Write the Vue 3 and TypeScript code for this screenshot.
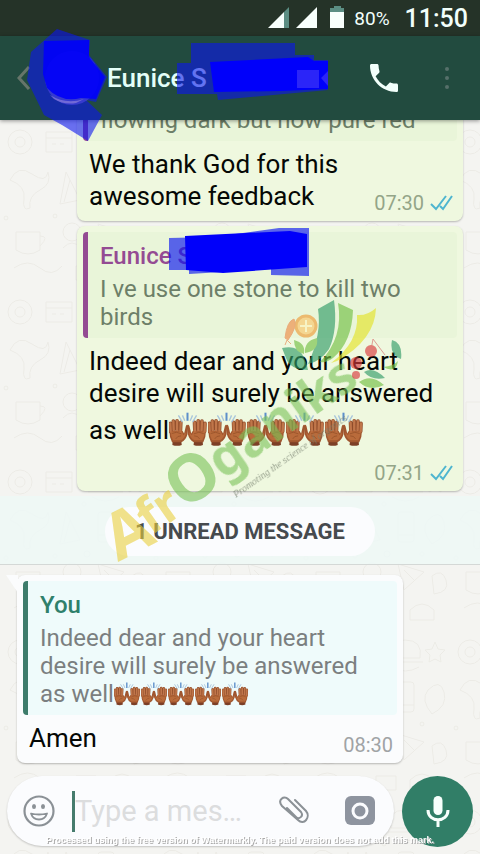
<script setup lang="ts">
import { ref } from 'vue'

interface Quote {
  author?: string
  text: string
  hands?: number
  tone: 'purple' | 'green'
}

interface Message {
  id: number
  mine: boolean
  quote: Quote
  text: string
  hands?: number
  time: string
}

const earlier: Message[] = [
  {
    id: 1,
    mine: true,
    quote: { text: 'flowing dark but now pure red', tone: 'purple' },
    text: 'We thank God for this awesome feedback',
    time: '07:30',
  },
  {
    id: 2,
    mine: true,
    quote: { author: 'Eunice S', text: 'I ve use one stone to kill two birds', tone: 'purple' },
    text: 'Indeed dear and your heart desire will surely be answered as well',
    hands: 5,
    time: '07:31',
  },
]

const unread: Message[] = [
  {
    id: 3,
    mine: false,
    quote: {
      author: 'You',
      text: 'Indeed dear and your heart desire will surely be answered as well',
      hands: 5,
      tone: 'green',
    },
    text: 'Amen',
    time: '08:30',
  },
]

const groups = [
  { key: 'earlier', messages: earlier },
  { key: 'unread', messages: unread },
]

const draft = ref('')
</script>

<template>
  <div class="screen">
    <svg class="defs" width="0" height="0" aria-hidden="true">
      <defs>
        <g id="hand">
          <path d="M11 84 L36 84 L38 98 Q24 103 10 98 Z" fill="#7c3f26" />
          <path d="M5 58 L4 34 M14 52 L13 27 M24 52 L24 26 M34 54 L35 31" stroke="#8f4c2a" stroke-width="11" stroke-linecap="round" />
          <path d="M1 56 L40 56 L45 64 L50 42 Q54 34 57 42 L55 66 Q50 84 37 90 L9 90 Q1 76 1 56Z" fill="#a0562f" />
          <path d="M5 58 L4 34 M14 54 L13 27 M24 54 L24 26 M34 56 L35 31" stroke="#c0764a" stroke-width="7" stroke-linecap="round" />
          <path d="M5 58 L38 58 L43 69 L51 60 Q48 79 35 84 L12 84 Q5 74 5 58Z" fill="#b96b3b" />
          <path d="M8 64 Q22 56 37 65 M20 80 Q25 70 36 71" fill="none" stroke="#8f4c26" stroke-width="2" />
        </g>
        <symbol id="hands" viewBox="0 0 116 104">
          <use href="#hand" />
          <use href="#hand" transform="translate(111 0) scale(-1 1)" />
          <path d="M55 2 L55 26" stroke="#5c8fca" stroke-width="6" />
          <path d="M40 10 L47 26 M70 10 L63 26 M28 10 L40 30 M82 10 L70 30" stroke="#a9c6dc" stroke-width="4" />
        </symbol>
        <pattern id="doodles" width="150" height="170" patternUnits="userSpaceOnUse">
          <g fill="none" stroke="#ecebe6" stroke-width="1">
            <circle cx="20" cy="22" r="12" /><circle cx="20" cy="22" r="5" />
            <path d="M46 12h26v20H46zM46 18h26M52 24h4m4 0h4" />
            <path d="M91 28q-4-18 14-18t15 18zM88 32h35M92 37q13 8 27 0" />
            <path d="M135 12l3 7 7 1-5 5 1 7-6-3-6 3 1-7-5-5 7-1z" />
            <path d="M10 60q8-16 22-6t16-2q4 12-8 18t-10 18q-8 4-6-9T10 60z" />
            <path d="M66 52l14 28-20 4zM70 60l-6 22" />
            <rect x="98" y="52" width="16" height="30" rx="3" /><path d="M98 75h16" />
            <path d="M128 60q12-12 16 2t-12 22q-12-14-4-24z" />
            <path d="M16 112h24v18q-12 8-24 0zM40 116q10 0 0 10" />
            <circle cx="72" cy="112" r="9" /><path d="M63 128q9-10 18 0M98 104l26 8-20 18zM104 110l10 10" />
            <path d="M132 116q10-8 14 4t-12 14zM14 148q14-10 26 0t22-2M76 146h20v14H76zM110 150q12-12 24 0v10h-24z" />
            <circle cx="55" cy="96" r="2" /><circle cx="87" cy="94" r="3" /><circle cx="84" cy="44" r="2" /><circle cx="122" cy="94" r="2" /><circle cx="6" cy="98" r="2" />
          </g>
        </pattern>
      </defs>
    </svg>

    <div class="status">
      <svg width="78" height="24" viewBox="0 0 78 24" aria-hidden="true">
        <path d="M0 22L16 6v16z" fill="#f7fffc" /><path d="M16 6l5-5v21h-5z" fill="#5b8e83" />
        <path d="M28 22L49 1v21z" fill="#f7fffc" />
        <path d="M62 6V2h4V0h7v2h3v4z" fill="#5b8e83" /><path d="M62 6h14v16H62z" fill="#f7fffc" />
      </svg>
      <span class="percent">80%</span>
      <span class="clock">11:50</span>
    </div>

    <header class="bar">
      <button class="icon back" type="button" aria-label="Back">
        <svg width="14" height="24" viewBox="0 0 14 24"><path d="M12 1L2 12l10 11" fill="none" stroke="#66756a" stroke-width="3" /></svg>
      </button>
      <div class="avatar"></div>
      <h1>Eunice S</h1>
      <button class="icon" type="button" aria-label="Call">
        <svg width="28" height="28" viewBox="3 3 18 18"><path fill="#f2fffb" d="M6.6 10.8c1.4 2.8 3.8 5.1 6.6 6.6l2.2-2.2c.3-.3.7-.4 1-.2 1.100.4 2.300.6 3.600.6.600 0 1 .4 1 1V20c0 .6-.4 1-1 1C10.600 21 3 13.400 3 4c0-.6.400-1 1-1h3.500c.6 0 1 .4 1 1 0 1.200.2 2.400.6 3.600.1.300 0 .7-.2 1z" /></svg>
      </button>
      <button class="icon more" type="button" aria-label="More options">
        <svg width="6" height="24" viewBox="0 0 6 24" fill="#56706a"><circle cx="3" cy="3" r="2" /><circle cx="3" cy="12" r="2" /><circle cx="3" cy="21" r="2" /></svg>
      </button>
    </header>

    <main class="room">
      <svg class="wallpaper" width="100%" height="100%" aria-hidden="true"><rect width="100%" height="100%" fill="url(#doodles)" /></svg>

      <section class="chat">
        <template v-for="group in groups" :key="group.key">
          <div v-if="group.key === 'unread'" class="divider"><span>1 UNREAD MESSAGE</span></div>
          <article v-for="m in group.messages" :key="m.id" class="bubble" :class="m.mine ? 'mine' : 'theirs'">
            <svg v-if="!m.mine" class="tail" width="12" height="18" viewBox="0 0 12 18" aria-hidden="true"><path d="M0 0h12v18z" fill="#fbfcfd" /></svg>
            <blockquote class="quote" :class="m.quote.tone">
              <strong v-if="m.quote.author">{{ m.quote.author }}</strong>
              <p>{{ m.quote.text }}<svg v-for="n in m.quote.hands ?? 0" :key="n" class="hands small"><use href="#hands" /></svg></p>
            </blockquote>
            <div class="body" :class="{ stacked: m.hands }">
              <p>{{ m.text }}<svg v-for="n in m.hands ?? 0" :key="n" class="hands"><use href="#hands" /></svg></p>
              <div class="meta">
                <time>{{ m.time }}</time>
                <svg v-if="m.mine" width="23" height="16" viewBox="0 0 23 16" aria-label="Read"><path d="M1 9l5 5L16 1M10 11l3 3L22 1" fill="none" stroke="#4fb5cf" stroke-width="2" /></svg>
              </div>
            </div>
          </article>
        </template>
      </section>

      <form class="composer" @submit.prevent>
        <div class="field">
          <button class="icon" type="button" aria-label="Emoji">
            <svg width="32" height="32" viewBox="0 0 32 32"><circle cx="16" cy="16" r="14.500" fill="none" stroke="#8b9196" stroke-width="2.200" /><ellipse cx="11" cy="11.500" rx="2" ry="2.600" fill="#8b9196" /><ellipse cx="20" cy="11.500" rx="2" ry="2.600" fill="#8b9196" /><path d="M8 18.500q8 2 16 0q-2 6-8 6t-8-6z" fill="none" stroke="#8b9196" stroke-width="1.800" stroke-linejoin="round" /></svg>
          </button>
          <span class="caret"></span>
          <input v-model="draft" type="text" aria-label="Message" placeholder="Type a mes…" />
          <button class="icon" type="button" aria-label="Attach">
            <svg width="32" height="30" viewBox="0 0 32 30"><path d="M17 4l11 11c5 6-2 15-8 9L4 10C-1 4 6-1 10 3l13 13c3 4-2 8-5 5L9 12" fill="none" stroke="#8b9196" stroke-width="2" stroke-linecap="round" /></svg>
          </button>
          <button class="icon camera" type="button" aria-label="Camera">
            <svg width="30" height="30" viewBox="0 0 30 30"><rect width="30" height="29" rx="6" fill="#8e949f" /><circle cx="15" cy="15" r="7" fill="none" stroke="#fbfcfe" stroke-width="3" /></svg>
          </button>
        </div>
        <button class="mic" type="button" aria-label="Record voice message">
          <svg width="24" height="32" viewBox="0 0 24 32"><rect x="7.500" y="0" width="9" height="19" rx="4.500" fill="#f7fffc" /><path d="M2 14c0 13 20 13 20 0M12 23v8" fill="none" stroke="#f7fffc" stroke-width="3" /></svg>
        </button>
      </form>
    </main>

    <svg class="overlay" viewBox="0 0 480 854" aria-hidden="true">
      <g fill="#0b16ef">
        <path d="M57 29L90 40l-1 15 18 22-11 25-10-2 16 15-14 26-26-16-18-10-17-35 4-28z" opacity=".6" />
        <path d="M44 41l45-1v17l16 20-9 22-15-1q-20 5-34-10l-4-14z" fill="#0000fa" opacity=".9" />
        <path d="M50 95q16 10 34 4l-8 4q-12 2-22-4z" fill="#8176d8" opacity=".8" />
        <path d="M191 43h104v12h19v5h14v30l-110 10-1-6h-40V63h14z" opacity=".6" />
        <path d="M210 62l98-5 6 4h14v28l-48 2-66 1z" fill="#0000fa" />
        <path d="M319 70h-22v18h22zm2 8l7-7v15z" fill="#5549f6" opacity=".5" />
        <path d="M169 238l44-1 66-9h30v48l-38-1v-6l-82 5v-4h-20z" opacity=".65" />
        <path d="M185 236l105-5 17 3v33l-84 6-37-3z" fill="#0000fa" />
      </g>

      <g class="logo">
        <g fill="#e9cf3c">
          <text x="118" y="562" font-size="65" transform="rotate(-27 118 562)">A</text>
          <text x="151" y="536" font-size="50" transform="rotate(-35 151 536)">fr</text>
        </g>
        <g fill="#79c257">
          <text x="184" y="511" font-size="65" transform="rotate(-35 184 511)">O</text>
          <text x="223" y="480" font-size="51" transform="rotate(-35 223 480)">ganiks</text>
        </g>
      </g>
      <text class="tagline" x="236" y="498" transform="rotate(-35 236 498)">Promoting the science of organics</text>

      <g opacity=".65">
        <circle cx="306" cy="326" r="10" fill="#fbc56a" stroke="#ee9a36" stroke-width="3" />
        <path d="M306 320v12M300 326h12" stroke="#fff1ba" stroke-width="2" />
        <path d="M285 338q2-17 9-19 4 7-6 21zM287 340l-2 5m2-5l4 4" fill="#f08b45" stroke="#e7854b" />
        <path d="M318 309l16-9q4 30-5 49-9 13-21 15 14-30 10-55z" fill="#329b68" />
        <path d="M338 303l15 7q-1 32-20 48-6 5-13 4 24-25 18-59z" fill="#72bf44" />
        <path d="M357 315q10 1 19-7-1 32-39 53l-6 2q28-21 26-48z" fill="#e4e229" />
        <path d="M282 348q15-3 20 6t6 16q-18 0-22-12z" fill="#329b68" />
        <path d="M294 340q12 3 10 14-10-2-10-14zM305 353q-1-12 12-15 2 13-12 15z" fill="#72bf44" />
        <path d="M371 350l2-11 12 16" fill="none" stroke="#d66b6a" />
        <circle cx="371" cy="351" r="6" fill="#d83a3c" /><circle cx="356" cy="363" r="6" fill="#d83a3c" /><circle cx="356" cy="375" r="4" fill="#d83a3c" />
        <path d="M392 340q11 3 9 19-12-4-9-19zM364 372q9-6 21 6-13 3-21-6z" fill="#329b68" />
        <path d="M359 382q12-9 25 3-14 7-25-3zM383 367q11-1 15-6-2 13-15 6z" fill="#72bf44" />
      </g>
      <text class="notice" x="46" y="843">Processed using the free version of Watermarkly. The paid version does not add this mark.</text>
    </svg>
  </div>
</template>

<style>
body {
  margin: 0;
}
</style>

<style scoped>
.screen {
  position: relative;
  display: flex;
  flex-direction: column;
  height: 100vh;
  overflow: hidden;
  font-family: Roboto, "Liberation Sans", sans-serif;
  background: #f4f4f1;
}

.defs {
  position: absolute;
}

p,
h1,
blockquote {
  margin: 0;
}

.icon {
  display: flex;
  padding: 0;
  border: 0;
  background: none;
}

.status {
  display: flex;
  flex: 0 0 36px;
  align-items: center;
  justify-content: flex-end;
  padding-right: 12px;
  background: #253328;
  color: #f2fffb;
}

.percent {
  margin-left: 8px;
  font-size: 19px;
}

.clock {
  margin-left: 15px;
  font-size: 25px;
  font-weight: 500;
}

.bar {
  z-index: 1;
  display: flex;
  flex: 0 0 84px;
  align-items: center;
  padding: 0 30px 0 17px;
  background: #224b3f;
  box-shadow: 0 1px 4px rgba(0, 0, 0, 0.4);
}

.avatar {
  width: 54px;
  height: 54px;
  margin-left: 14px;
  border-radius: 50%;
  background: #77709f;
}

.bar h1 {
  flex: 1;
  margin-left: 8px;
  color: #e4fff8;
  font-size: 26px;
  font-weight: 500;
}

.more {
  margin-left: 46px;
}

.room {
  position: relative;
  display: flex;
  flex: 1;
  flex-direction: column;
  min-height: 0;
}

.wallpaper {
  position: absolute;
  inset: 0;
}

.chat {
  position: relative;
  display: flex;
  flex: 1;
  flex-direction: column;
  justify-content: flex-end;
  min-height: 0;
}

.bubble {
  position: relative;
  box-sizing: border-box;
  width: calc(100% - 94px);
  padding: 6px;
  border-radius: 8px;
  box-shadow: 0 1px 2px rgba(0, 0, 0, 0.25);
}

.mine {
  align-self: flex-end;
  margin: 0 17px 5px 0;
  background: #eff8df;
}

.theirs {
  margin: 10px 0 0 17px;
  background: #fbfcfd;
}

.tail {
  position: absolute;
  top: 0;
  left: -11px;
}

.quote {
  padding: 10px 12px 7px;
  border-left: 5px solid;
  border-radius: 4px;
  font-size: 24px;
  line-height: 28px;
}

.quote p {
  color: #6d7f68;
}

.quote strong {
  display: block;
  margin-bottom: 5px;
  font-weight: 500;
}

.purple {
  border-color: #944b93;
  background: #e9f5d9;
  color: #944b93;
}

.green {
  border-color: #3e7c6b;
  background: #effbfb;
  color: #2f806b;
}

.green p {
  color: #7b7f80;
}

.body {
  display: flex;
  align-items: flex-end;
  justify-content: space-between;
  padding: 7px 4px 0 6px;
  font-size: 26px;
  line-height: 32px;
}

.body p {
  padding-bottom: 3px;
  color: #050805;
}

.stacked {
  flex-direction: column;
  align-items: stretch;
  gap: 11px;
}

.meta {
  display: flex;
  align-items: center;
  align-self: flex-end;
  gap: 6px;
  color: #94a588;
  font-size: 20px;
  line-height: 24px;
}

.theirs .meta {
  color: #a0a3a5;
}

.hands {
  width: 39px;
  height: 35px;
  margin-top: 3px;
  vertical-align: -8px;
}

.small {
  width: 27px;
  height: 24px;
  margin: 0;
  vertical-align: -4px;
}

.divider {
  display: flex;
  justify-content: center;
  padding: 11px 0 8px;
  border-bottom: 1px solid #d4d8d6;
  background: rgba(237, 248, 246, 0.85);
}

.divider span {
  padding: 0 30px;
  border-radius: 25px;
  background: #fbfcfe;
  color: #464a4e;
  font-size: 22px;
  font-weight: 700;
  line-height: 49px;
}

.composer {
  position: relative;
  display: flex;
  gap: 8px;
  padding: 13px 7px 7px;
}

.field {
  display: flex;
  flex: 1;
  align-items: center;
  min-width: 0;
  height: 70px;
  padding: 0 19px 0 16px;
  box-sizing: border-box;
  border-radius: 35px;
  background: #fbfcfe;
  box-shadow: 0 1px 2px rgba(0, 0, 0, 0.2);
}

.caret {
  width: 3px;
  height: 41px;
  margin-left: 17px;
  background: #467c6d;
}

input {
  flex: 1;
  min-width: 0;
  padding: 0;
  border: 0;
  outline: 0;
  background: none;
  color: #111;
  font: 29px Roboto, "Liberation Sans", sans-serif;
}

input::placeholder {
  color: #dcddde;
  opacity: 1;
}

.camera {
  margin-left: 35px;
}

.mic {
  display: flex;
  align-items: center;
  justify-content: center;
  width: 71px;
  height: 71px;
  padding: 0;
  border: 0;
  border-radius: 50%;
  background: #317e67;
}

.overlay {
  position: absolute;
  z-index: 2;
  inset: 0;
  width: 100%;
  height: 100%;
  pointer-events: none;
}

.logo {
  font-family: "Noto Sans", "Open Sans", sans-serif;
  font-weight: 700;
  opacity: 0.6;
}

.tagline {
  fill: #77806f;
  font: italic 10px "Liberation Serif", serif;
  opacity: 0.7;
}

.notice {
  fill: #fff;
  font: bold 9px "Liberation Sans", sans-serif;
  filter: drop-shadow(1px 1px 0 #aaa);
}
</style>
